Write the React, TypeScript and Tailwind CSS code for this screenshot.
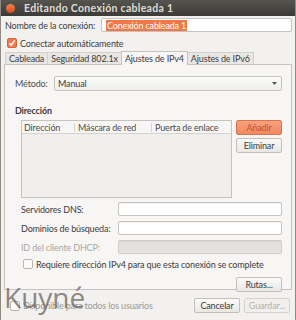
import React from 'react';

// Ubuntu (Ambiance) network connection editor dialog, IPv4 tab.

const FONT = { fontFamily: 'Lato, "Open Sans", "DejaVu Sans", sans-serif' };

function Field({ disabled }: { disabled?: boolean }) {
  return (
    <div
      className={`h-[14px] flex-1 rounded-[2px] border ${
        disabled ? 'border-[#cfccc7] bg-[#e4e2df]' : 'border-[#c6c3be] bg-white'
      } shadow-[inset_0_1px_0_rgba(0,0,0,0.05)]`}
    />
  );
}

function Button({ label, variant }: { label: string; variant?: 'accent' | 'disabled' }) {
  const styles =
    variant === 'accent'
      ? 'border-[#d9764f] bg-gradient-to-b from-[#f7a07e] to-[#ef8a63] text-[#c4532b]'
      : variant === 'disabled'
      ? 'border-[#d6d3ce] bg-[#f1f0ee] text-[#b3b0aa]'
      : 'border-[#c2bfba] bg-gradient-to-b from-[#fbfbfa] to-[#e9e7e4] text-[#3c3c3c]';
  return (
    <div
      className={`flex h-[15px] w-[46px] items-center justify-center rounded-[2px] border ${styles}`}
    >
      {label}
    </div>
  );
}

function CheckBox({ checked }: { checked?: boolean }) {
  if (checked) {
    return (
      <svg width="10" height="10" viewBox="0 0 10 10" className="shrink-0">
        <rect x="0.5" y="0.5" width="9" height="9" rx="1.5" fill="#ef7b4b" stroke="#d5643a" />
        <path d="M2.3 5.2 L4.2 7.3 L7.8 2.4" fill="none" stroke="#fff4ec" strokeWidth="1.6" />
      </svg>
    );
  }
  return (
    <svg width="10" height="10" viewBox="0 0 10 10" className="shrink-0">
      <rect x="0.5" y="0.5" width="9" height="9" rx="1.5" fill="#fbfbfa" stroke="#b9b6b1" />
    </svg>
  );
}

export default function App() {
  return (
    <div
      className="relative h-[320px] w-[296px] overflow-hidden whitespace-nowrap border-x border-[#8f8a82] bg-[#f2f1f0] text-[9px] leading-none tracking-[-0.15px] text-[#3c3c3c]"
      style={FONT}
    >
      {/* Title bar */}
      <div className="flex h-[16px] items-center bg-gradient-to-b from-[#55544f] to-[#3c3b37]">
        <div className="ml-[5px] h-[9px] w-[9px] rounded-full bg-gradient-to-b from-[#f0814f] to-[#d94a17]" />
        <span className="ml-[9px] text-[10.5px] font-bold tracking-[0.3px] text-[#dfdbd2]">
          Editando Conexión cableada 1
        </span>
      </div>

      <div className="px-[3px]">
        {/* Connection name */}
        <div className="mt-[2px] flex h-[14px] items-center">
          <span className="ml-[1px] w-[96px]">Nombre de la conexión:</span>
          <div className="flex h-[14px] flex-1 items-center rounded-[2px] border border-[#c6c3be] bg-white pl-[4px]">
            <span className="bg-[#f07746] px-[1px] py-[1px] text-white">Conexión cableada 1</span>
          </div>
        </div>

        {/* Auto connect */}
        <div className="mt-[5px] flex h-[12px] items-center gap-[3px] pl-[3px]">
          <CheckBox checked />
          <span>Conectar automáticamente</span>
        </div>

        {/* Tabs */}
        <div className="mt-[2px] flex h-[13px] items-end pl-[1px]">
          <div className="flex h-[12px] items-center border-t border-l border-[#d3d0cb] bg-[#e9e7e4] px-[3px]">Cableada</div>
          <div className="flex h-[12px] items-center border-t border-l border-[#d3d0cb] bg-[#e9e7e4] px-[3px]">Seguridad 802.1x</div>
          <div className="relative z-10 -mb-px flex h-[14px] items-center border-x border-t border-[#c6c3be] bg-[#f7f6f5] px-[3px]">Ajustes de IPv4</div>
          <div className="flex h-[12px] items-center border-t border-r border-[#d3d0cb] bg-[#e9e7e4] px-[3px]">Ajustes de IPv6</div>
        </div>

        {/* Tab panel */}
        <div className="h-[226px] border border-[#c6c3be] bg-[#f7f6f5] pl-[9px] pr-[9px] pt-[11px]">
          <div className="flex h-[15px] items-center">
            <span className="w-[40px] pl-[1px] text-[#4c4c4c]">Método:</span>
            <div className="flex h-[15px] flex-1 items-center justify-between rounded-[2px] border border-[#c6c3be] bg-gradient-to-b from-[#fbfbfa] to-[#efeeec] pl-[3px] pr-[4px]">
              <span>Manual</span>
              <svg width="5" height="3" viewBox="0 0 5 3">
                <path d="M0 0 L5 0 L2.5 3 Z" fill="#555" />
              </svg>
            </div>
          </div>

          <div className="mt-[15px] pl-[1px] font-bold">Dirección</div>

          <div className="mt-[5px] flex gap-[4px] pl-[7px]">
            {/* Address table */}
            <div className="h-[78px] w-[211px] border border-[#c6c3be] bg-[#f0efed]">
              <div className="flex h-[13px] items-center border-b border-[#d6d3ce] bg-[#f7f6f5] text-[#4c4c4c]">
                <div className="w-[53px] border-r border-[#d6d3ce] pl-[2px]">Dirección</div>
                <div className="w-[77px] border-r border-[#d6d3ce] pl-[3px]">Máscara de red</div>
                <div className="pl-[3px]">Puerta de enlace</div>
              </div>
            </div>
            <div className="flex flex-col gap-[3px]">
              <Button label="Añadir" variant="accent" />
              <Button label="Eliminar" />
            </div>
          </div>

          <div className="mt-[4px] flex flex-col gap-[5px] pl-[7px]">
            <div className="flex items-center">
              <span className="w-[97px]">Servidores DNS:</span>
              <Field />
            </div>
            <div className="flex items-center">
              <span className="w-[97px]">Dominios de búsqueda:</span>
              <Field />
            </div>
            <div className="flex items-center">
              <span className="w-[97px] text-[#a9a6a0]">ID del cliente DHCP:</span>
              <Field disabled />
            </div>
          </div>

          <div className="mt-[5px] flex h-[10px] items-center gap-[3px] pl-[9px]">
            <CheckBox />
            <span>Requiere dirección IPv4 para que esta conexión se complete</span>
          </div>

          <div className="mt-[8px] flex justify-end">
            <Button label="Rutas..." />
          </div>
        </div>

        {/* Footer */}
        <div className="mt-[7px] flex h-[17px] items-center">
          <div className="flex items-center gap-[3px] pl-[6px] text-[#9b9892]">
            <CheckBox />
            <span>Disponible para todos los usuarios</span>
          </div>
          <div className="ml-auto flex gap-[4px] pr-[2px]">
            <Button label="Cancelar" />
            <Button label="Guardar..." variant="disabled" />
          </div>
        </div>
      </div>

      {/* Watermark */}
      <div
        className="pointer-events-none absolute left-[3px] top-[283px] text-[28px] leading-none tracking-normal text-[#6e6b66]/80"
        style={{ fontFamily: '"Open Sans", sans-serif' }}
      >
        Kuyné
      </div>
    </div>
  );
}
